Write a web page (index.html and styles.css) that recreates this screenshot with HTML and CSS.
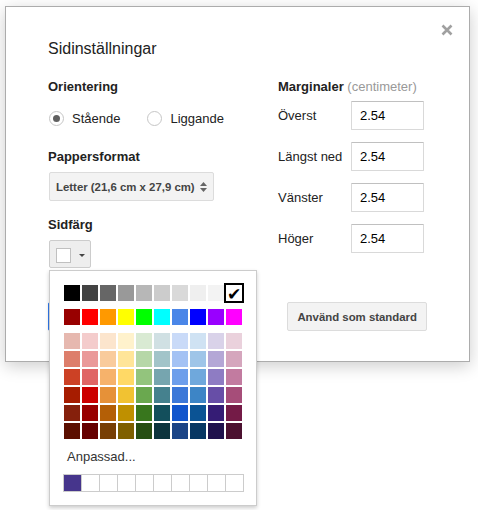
FILE: index.html
```html
<!DOCTYPE html>
<html lang="sv">
<head>
  <meta charset="UTF-8">
  <title>Sidinställningar</title>
  <link rel="stylesheet" href="styles.css">
</head>
<body>
  <div class="dialog">
    <span class="close">
      <svg width="12" height="12" viewBox="0 0 12 12"><path d="M1.5 1.5 L10.5 10.5 M10.5 1.5 L1.5 10.5" stroke="#a0a0a0" stroke-width="2.6" fill="none"/></svg>
    </span>
    <h1 class="title">Sidinställningar</h1>

    <div class="columns">
      <div class="col-left">
        <h3 class="section">Orientering</h3>
        <div class="radios">
          <label class="radio"><span class="radio-circle checked"></span>Stående</label>
          <label class="radio"><span class="radio-circle"></span>Liggande</label>
        </div>

        <h3 class="section paper">Pappersformat</h3>
        <div class="select">
          <span>Letter (21,6 cm x 27,9 cm)</span>
          <svg width="7" height="10" viewBox="0 0 7 10"><path d="M3.5 0 L7 4 L0 4 Z M0 6 L7 6 L3.5 10 Z" fill="#666"/></svg>
        </div>

        <h3 class="section page-color">Sidfärg</h3>
        <div class="color-picker">
          <div class="color-btn">
            <span class="color-preview"></span>
            <span class="caret"></span>
          </div>
          <div class="palette">
            <div class="palette-row" id="rowGray"></div>
            <div class="palette-row" id="rowBright"></div>
            <div class="palette-grid" id="rowShades"></div>
            <div class="custom-label">Anpassad...</div>
            <table class="custom-row">
              <tr>
                <td class="custom-color"></td><td></td><td></td><td></td><td></td>
                <td></td><td></td><td></td><td></td><td></td>
              </tr>
            </table>
          </div>
        </div>
      </div>

      <div class="col-right">
        <h3 class="section">Marginaler <span class="unit">(centimeter)</span></h3>
        <div class="margin-row"><span class="margin-label">Överst</span><input class="margin-input" type="text" value="2.54"></div>
        <div class="margin-row"><span class="margin-label">Längst ned</span><input class="margin-input" type="text" value="2.54"></div>
        <div class="margin-row"><span class="margin-label">Vänster</span><input class="margin-input" type="text" value="2.54"></div>
        <div class="margin-row"><span class="margin-label">Höger</span><input class="margin-input" type="text" value="2.54"></div>
      </div>
    </div>

    <div class="footer">
      <div class="footer-left">
        <button class="btn btn-blue">OK</button>
        <button class="btn">Avbryt</button>
      </div>
      <button class="btn">Använd som standard</button>
    </div>
  </div>

  <script>
    // standardpaletten
    const grays = ['#000000', '#434343', '#666666', '#999999', '#b7b7b7', '#cccccc', '#d9d9d9', '#efefef', '#f3f3f3', '#ffffff'];
    const brights = ['#980000', '#ff0000', '#ff9900', '#ffff00', '#00ff00', '#00ffff', '#4a86e8', '#0000ff', '#9900ff', '#ff00ff'];
    const shades = [
      ['#e6b8af', '#f4cccc', '#fce5cd', '#fff2cc', '#d9ead3', '#d0e0e3', '#c9daf8', '#cfe2f3', '#d9d2e9', '#ead1dc'],
      ['#dd7e6b', '#ea9999', '#f9cb9c', '#ffe599', '#b6d7a8', '#a2c4c9', '#a4c2f4', '#9fc5e8', '#b4a7d6', '#d5a6bd'],
      ['#cc4125', '#e06666', '#f6b26b', '#ffd966', '#93c47d', '#76a5af', '#6d9eeb', '#6fa8dc', '#8e7cc3', '#c27ba0'],
      ['#a61c00', '#cc0000', '#e69138', '#f1c232', '#6aa84f', '#45818e', '#3c78d8', '#3d85c6', '#674ea7', '#a64d79'],
      ['#85200c', '#990000', '#b45f06', '#bf9000', '#38761d', '#134f5c', '#1155cc', '#0b5394', '#351c75', '#741b47'],
      ['#5b0f00', '#660000', '#783f04', '#7f6000', '#274e13', '#0c343d', '#1c4587', '#073763', '#20124d', '#4c1130']
    ];
    const selected = '#ffffff';

    function addCell(container, color) {
      const cell = document.createElement('div');
      cell.className = 'cell';
      const swatch = document.createElement('div');
      swatch.className = 'swatch';
      swatch.style.backgroundColor = color;
      if (color === selected) {
        swatch.classList.add('selected');
        swatch.textContent = '✔';
      }
      cell.appendChild(swatch);
      container.appendChild(cell);
    }

    grays.forEach(c => addCell(document.getElementById('rowGray'), c));
    brights.forEach(c => addCell(document.getElementById('rowBright'), c));
    shades.forEach(row => row.forEach(c => addCell(document.getElementById('rowShades'), c)));
  </script>
</body>
</html>
```

FILE: styles.css
```css
html,
body {
  height: 100%;
}

body {
  margin: 0;
  min-height: 510px;
  font-family: "Liberation Sans", Arial, sans-serif;
  font-size: 13px;
  color: #222;
  background-color: #fff;
}

.dialog {
  position: relative;
  box-sizing: border-box;
  width: 465px;
  margin: 6px 0 0 5px;
  padding: 32px 42px 30px;
  background-color: #fff;
  border: 1px solid #acacac;
  box-shadow: 0 4px 16px rgba(0,0,0,0.2);
}

.close {
  position: absolute;
  top: 17px;
  right: 16px;
  width: 12px;
  height: 12px;
  line-height: 0;
}

.title {
  margin: 0;
  font-size: 16px;
  font-weight: normal;
  line-height: 20px;
  color: #222;
}

.columns {
  display: grid;
  grid-template-columns: 230px 1fr;
  margin-top: 20px;
}

.section {
  margin: 0;
  font-size: 13px;
  font-weight: bold;
  line-height: 16px;
  color: #222;
}

.section.paper {
  margin-top: 23px;
}

.section.page-color {
  margin-top: 16px;
}

.unit {
  font-weight: normal;
  color: #999;
}

.radios {
  display: flex;
  align-items: center;
  height: 16px;
  margin-top: 15px;
}

.radio {
  display: flex;
  align-items: center;
  margin-right: 26px;
}

.radio-circle {
  display: flex;
  align-items: center;
  justify-content: center;
  box-sizing: border-box;
  width: 15px;
  height: 15px;
  margin: 0 8px 0 1px;
  border: 1px solid #c6c6c6;
  border-radius: 50%;
  background-color: #fff;
}

.radio-circle.checked::after {
  content: "";
  width: 7px;
  height: 7px;
  border-radius: 50%;
  background-color: #606060;
}

.select {
  display: flex;
  align-items: center;
  justify-content: space-between;
  box-sizing: border-box;
  width: 165px;
  height: 29px;
  margin: 7px 0 0 1px;
  padding: 0 6px 0 6px;
  background-color: #f3f3f3;
  border: 1px solid #dcdcdc;
  border-radius: 2px;
  font-size: 11.4px;
  font-weight: bold;
  color: #444;
}

.color-picker {
  position: relative;
  margin: 7px 0 0 1px;
}

.color-btn {
  display: flex;
  align-items: center;
  box-sizing: border-box;
  width: 42px;
  height: 28px;
  padding: 2px 0 0 6px;
  background-color: #eee;
  border: 1px solid #ccc;
  border-radius: 2px;
}

.color-preview {
  box-sizing: border-box;
  width: 15px;
  height: 15px;
  background-color: #fff;
  border: 1px solid #c0c0c0;
}

.caret {
  margin-left: 8px;
  border-left: 3px solid transparent;
  border-right: 3px solid transparent;
  border-top: 3px solid #444;
}

.palette {
  position: absolute;
  top: 30px;
  left: 0;
  z-index: 10;
  box-sizing: border-box;
  width: 208px;
  padding: 13px 12px 13px 13px;
  background-color: #fff;
  border: 1px solid #ccc;
  box-shadow: 0 2px 4px rgba(0,0,0,0.2);
}

.palette-row,
.palette-grid {
  display: grid;
  grid-template-columns: repeat(10, 18px);
  grid-auto-rows: 18px;
}

.palette-row + .palette-row,
.palette-row + .palette-grid {
  margin-top: 6px;
}

.cell {
  padding: 1px;
}

.swatch {
  width: 16px;
  height: 16px;
  font-family: "DejaVu Sans", sans-serif;
  font-size: 17px;
  line-height: 18px;
  text-align: center;
  color: #000;
}

.swatch.selected {
  outline: 2px solid #000;
}

.custom-label {
  margin-top: 9px;
  padding-left: 4px;
  line-height: 16px;
  color: #333;
}

.custom-row {
  margin-top: 9px;
  border-collapse: collapse;
}

.custom-row td {
  width: 17px;
  height: 16px;
  padding: 0;
  border: 1px solid #ccc;
}

.custom-row .custom-color {
  background-color: #46358c;
}

.margin-row {
  display: flex;
  align-items: center;
  margin-top: 12px;
}

.section + .margin-row {
  margin-top: 6px;
}

.margin-label {
  width: 73px;
}

.margin-input {
  box-sizing: border-box;
  width: 73px;
  height: 29px;
  margin: 0;
  padding: 0 0 0 8px;
  font-family: "Liberation Sans", Arial, sans-serif;
  font-size: 13px;
  color: #000;
  border: 1px solid #d9d9d9;
  border-top-color: #c0c0c0;
  border-radius: 1px;
  outline: none;
}

.footer {
  display: flex;
  justify-content: space-between;
  margin-top: 34px;
}

.footer-left {
  display: flex;
  gap: 16px;
}

.btn {
  box-sizing: border-box;
  height: 29px;
  padding: 0 9px;
  font-family: "Liberation Sans", Arial, sans-serif;
  font-size: 11.4px;
  font-weight: bold;
  color: #444;
  background-color: #f3f3f3;
  border: 1px solid #dcdcdc;
  border-radius: 2px;
}

.btn-blue {
  min-width: 70px;
  color: #fff;
  background-color: #4d90fe;
  border-color: #3079ed;
}
```
